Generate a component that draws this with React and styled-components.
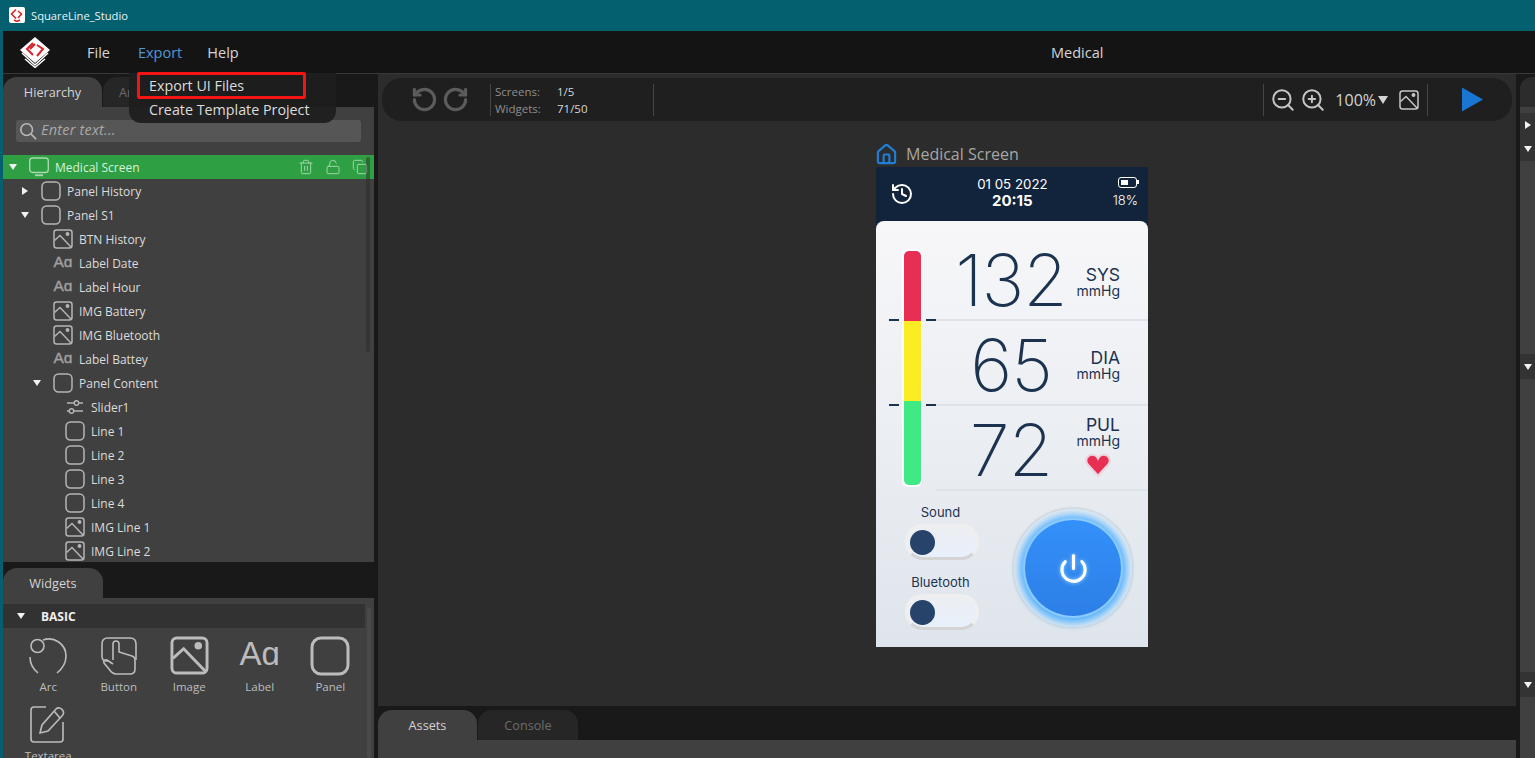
import styled, { createGlobalStyle } from 'styled-components';
import {
  Copy,
  History,
  House,
  LockOpen,
  Power,
  RotateCcw,
  RotateCw,
  Trash2,
  ZoomIn,
  ZoomOut,
} from 'lucide-react';

const GlobalStyle = createGlobalStyle`
  html, body {
    margin: 0;
    height: 100%;
    overflow: hidden;
    background: #04606f;
  }
  * { box-sizing: border-box; }
`;

const TREE = [
  { name: 'Medical Screen', level: 0, icon: 'screen', arrow: 'down', selected: true },
  { name: 'Panel History', level: 1, icon: 'panel', arrow: 'right' },
  { name: 'Panel S1', level: 1, icon: 'panel', arrow: 'down' },
  { name: 'BTN History', level: 2, icon: 'image' },
  { name: 'Label Date', level: 2, icon: 'label' },
  { name: 'Label Hour', level: 2, icon: 'label' },
  { name: 'IMG Battery', level: 2, icon: 'image' },
  { name: 'IMG Bluetooth', level: 2, icon: 'image' },
  { name: 'Label Battey', level: 2, icon: 'label' },
  { name: 'Panel Content', level: 2, icon: 'panel', arrow: 'down' },
  { name: 'Slider1', level: 3, icon: 'slider' },
  { name: 'Line 1', level: 3, icon: 'panel' },
  { name: 'Line 2', level: 3, icon: 'panel' },
  { name: 'Line 3', level: 3, icon: 'panel' },
  { name: 'Line 4', level: 3, icon: 'panel' },
  { name: 'IMG Line 1', level: 3, icon: 'image' },
  { name: 'IMG Line 2', level: 3, icon: 'image' },
];

const READINGS = [
  { value: '132', unit: 'SYS', height: 100, top: 20, shift: 2 },
  { value: '65', unit: 'DIA', height: 85, top: 4, shift: -1 },
  { value: '72', unit: 'PUL', height: 85, top: 4, shift: -7, heart: true },
];

function PanelIcon({ size = 20 }) {
  return (
    <svg width={size} height={size} viewBox="0 0 20 20" fill="none" stroke="currentColor" strokeWidth="1.5">
      <rect x="1" y="1" width="18" height="18" rx="4.5" />
    </svg>
  );
}

function ImageIcon({ size = 20 }) {
  return (
    <svg width={size} height={size} viewBox="0 0 20 20" fill="none" stroke="currentColor" strokeWidth="1.5">
      <rect x="1" y="1" width="18" height="18" rx="2.5" />
      <path d="M1.5 11.5 L7 6.5 L18 18" />
      <circle cx="14.5" cy="5" r="1.2" fill="currentColor" />
    </svg>
  );
}

function SliderIcon() {
  return (
    <svg width="18" height="18" viewBox="0 0 18 18" fill="none" stroke="currentColor" strokeWidth="1.4">
      <path d="M1 5 H8 M13 5 H17 M1 13 H3 M8 13 H17" />
      <circle cx="10.5" cy="5" r="2.2" />
      <circle cx="5.5" cy="13" r="2.2" />
    </svg>
  );
}

function ScreenIcon() {
  return (
    <svg width="20" height="20" viewBox="0 0 20 20" fill="none" stroke="#a9d8b0" strokeWidth="1.4">
      <rect x="0.7" y="1" width="18.6" height="14.5" rx="3" />
      <path d="M6 18.3 H14" strokeWidth="1.8" />
    </svg>
  );
}

function ArcIcon() {
  return (
    <svg width="40" height="40" viewBox="0 0 40 40" fill="none" stroke="currentColor" strokeWidth="1.6">
      <path d="M15 4 C26 0 38 8 38 20 C38 28 34 33 29 37 M10 37 C5 33 2 27 2 21" />
      <circle cx="9.5" cy="10" r="6.5" />
    </svg>
  );
}

function ButtonIcon() {
  return (
    <svg width="40" height="40" viewBox="0 0 40 40" fill="none" stroke="currentColor" strokeWidth="1.6">
      <path d="M10 25 H7 C4 25 3 23 3 20 V8 C3 4 5 2 9 2 H31 C35 2 37 4 37 8 V24" />
      <path d="M14 24 V8 C14 4 20 4 20 8 V16 L33 20 C36 21 36 23 36 26 V33 C36 37 34 38 31 38 H17 C14 38 12 36 10 33 L5 27 C4 25 6 23 8 24 L14 28" />
    </svg>
  );
}

function TextareaIcon() {
  return (
    <svg width="36" height="38" viewBox="0 0 36 38" fill="none" stroke="currentColor" strokeWidth="1.6">
      <path d="M16 2 H4 C2 2 1 3 1 5 V34 C1 36 2 37 4 37 H30 C32 37 33 36 33 34 V17" />
      <path d="M10 28 L12 20 L26 4 C28 2 31 3 32.500 5 C34 7 34 9 32 11 L18 26 Z" />
      <path d="M24 6 L30 13" />
    </svg>
  );
}

function Logo() {
  return (
    <svg width="32" height="32" viewBox="0 0 32 32">
      <path d="M16 1 L31 14 L16 27 L1 14 Z" fill="#fff" />
      <path d="M14 7 L8 13 L14 19 M18 9 L24 13 L18 20 M11 13 L16 8" fill="none" stroke="#d8242a" strokeWidth="2" />
      <path d="M3 17 L16 29 L29 17" fill="none" stroke="#fff" strokeWidth="1.6" />
      <path d="M6 23 L16 31.500 L26 23" fill="none" stroke="#fff" strokeWidth="1.4" />
    </svg>
  );
}

function WindowLogo() {
  return (
    <AppBadge>
      <svg width="14" height="14" viewBox="0 0 14 14" fill="none" stroke="#d8242a" strokeWidth="1.6">
        <path d="M6 1.500 L1.500 6 L6 10.500 M8 3 L11.500 6 L8 10 M4 12 L7 13.500 L10 12" />
      </svg>
    </AppBadge>
  );
}

function TreeIcon({ type }) {
  if (type === 'screen') return <ScreenIcon />;
  if (type === 'image') return <ImageIcon />;
  if (type === 'slider') return <SliderIcon />;
  if (type === 'label') return <AaMark>Aɑ</AaMark>;
  return <PanelIcon />;
}

function ReadingRow({ reading }) {
  return (
    <Reading $height={reading.height} $top={reading.top}>
      <BigValue>{reading.value}</BigValue>
      <UnitColumn $shift={reading.shift}>
        <UnitName>{reading.unit}</UnitName>
        <UnitSmall>mmHg</UnitSmall>
        {reading.heart && (
          <HeartIcon viewBox="0 0 24 24">
            <path
              d="M12 22 L2.500 11.500 C-0.500 7.500 2 2.500 6.500 2.500 C9 2.500 11 4 12 6 C13 4 15 2.500 17.500 2.500 C22 2.500 24.500 7.500 21.500 11.500 Z"
              fill="#e62f53"
              stroke="#ecd3dc"
              strokeWidth="2"
            />
          </HeartIcon>
        )}
      </UnitColumn>
    </Reading>
  );
}

export default function App() {
  return (
    <>
      <GlobalStyle />
      <Window>
        <TitleBar>
          <WindowLogo />
          <span>SquareLine_Studio</span>
        </TitleBar>

        <MenuBar>
          <LogoSlot>
            <Logo />
          </LogoSlot>
          <MenuItem $gap={28}>File</MenuItem>
          <MenuItem $gap={25} $active>Export</MenuItem>
          <MenuItem>Help</MenuItem>
          <ProjectName>Medical</ProjectName>
          <Dropdown>
            <DropdownItem>Export UI Files</DropdownItem>
            <DropdownItem>Create Template Project</DropdownItem>
            <RedMark />
          </Dropdown>
        </MenuBar>

        <Workspace>
          <LeftColumn>
            <Tabs>
              <Tab $active $width={99}>Hierarchy</Tab>
              <Tab $width={99}>Animations</Tab>
            </Tabs>
            <HierarchyPanel>
              <SearchBox>
                <SearchGlass viewBox="0 0 20 20">
                  <circle cx="8.500" cy="8.500" r="6.500" />
                  <path d="M13.500 13.500 L19 19" />
                </SearchGlass>
                <SearchHint>Enter text...</SearchHint>
              </SearchBox>
              <TreeList>
                {TREE.map((item) => (
                  <TreeRow key={item.name} $level={item.level} $selected={item.selected}>
                    <ArrowSlot>
                      {item.arrow === 'down' && <ArrowDown />}
                      {item.arrow === 'right' && <ArrowRight />}
                    </ArrowSlot>
                    <TreeIconSlot>
                      <TreeIcon type={item.icon} />
                    </TreeIconSlot>
                    <TreeName $selected={item.selected}>{item.name}</TreeName>
                    {item.selected && (
                      <RowActions>
                        <Trash2 size={16} strokeWidth={1.4} />
                        <LockOpen size={16} strokeWidth={1.4} />
                        <Copy size={16} strokeWidth={1.4} />
                      </RowActions>
                    )}
                  </TreeRow>
                ))}
                <TreeScroll />
              </TreeList>
            </HierarchyPanel>

            <WidgetTabs>
              <Tab $active $width={100}>Widgets</Tab>
            </WidgetTabs>
            <WidgetPanel>
              <WidgetHeader>
                <ArrowSlot>
                  <ArrowDown />
                </ArrowSlot>
                BASIC
              </WidgetHeader>
              <WidgetGrid>
                <WidgetCell>
                  <WidgetIcon><ArcIcon /></WidgetIcon>
                  Arc
                </WidgetCell>
                <WidgetCell>
                  <WidgetIcon><ButtonIcon /></WidgetIcon>
                  Button
                </WidgetCell>
                <WidgetCell>
                  <WidgetIcon><ImageIcon size={39} /></WidgetIcon>
                  Image
                </WidgetCell>
                <WidgetCell>
                  <WidgetIcon><BigAa>Aɑ</BigAa></WidgetIcon>
                  Label
                </WidgetCell>
                <WidgetCell>
                  <WidgetIcon><PanelIcon size={40} /></WidgetIcon>
                  Panel
                </WidgetCell>
                <WidgetCell>
                  <WidgetIcon><TextareaIcon /></WidgetIcon>
                  Textarea
                </WidgetCell>
              </WidgetGrid>
              <WidgetScroll />
            </WidgetPanel>
          </LeftColumn>

          <CenterColumn>
            <Canvas>
              <Toolbar>
                <UndoGroup>
                  <RotateCcw size={27} strokeWidth={2.8} />
                  <RotateCw size={27} strokeWidth={2.8} />
                </UndoGroup>
                <Separator />
                <Stats>
                  <StatName>Screens:</StatName>
                  <StatValue>1/5</StatValue>
                  <StatName>Widgets:</StatName>
                  <StatValue>71/50</StatValue>
                </Stats>
                <Separator />
                <ToolbarSpring />
                <Separator />
                <ZoomGroup>
                  <ZoomOut size={26} strokeWidth={1.8} />
                  <ZoomIn size={26} strokeWidth={1.8} />
                </ZoomGroup>
                <ZoomValue>100%</ZoomValue>
                <ZoomCaret />
                <ToolbarImage>
                  <ImageIcon size={20} />
                </ToolbarImage>
                <Separator />
                <PlayButton />
              </Toolbar>

              <PhoneBlock>
                <ScreenCaption>
                  <House size={23} color="#1f7fd6" strokeWidth={2.2} />
                  <span>Medical Screen</span>
                </ScreenCaption>
                <Phone>
                  <PhoneHeader>
                    <History size={24} color="#fff" strokeWidth={2} />
                    <DateBlock>
                      <DateText>01 05 2022</DateText>
                      <TimeText>20:15</TimeText>
                    </DateBlock>
                    <BatteryBlock>
                      <BatteryShell>
                        <BatteryLevel />
                      </BatteryShell>
                      <BatteryText>18%</BatteryText>
                    </BatteryBlock>
                  </PhoneHeader>
                  <PhoneBody>
                    <Measures>
                      <GaugeColumn>
                        <Gauge>
                          <GaugePart $color="#e62f53" $height={70} />
                          <GaugePart $color="#fbec23" $height={80} />
                          <GaugePart $color="#3fea85" $height={84} $last />
                          <Tick $top={70} $left={-13} />
                          <Tick $top={70} $left={24} />
                          <Tick $top={155} $left={-13} />
                          <Tick $top={155} $left={24} />
                        </Gauge>
                      </GaugeColumn>
                      <Readings>
                        {READINGS.map((r) => (
                          <ReadingRow key={r.unit} reading={r} />
                        ))}
                      </Readings>
                    </Measures>
                    <Controls>
                      <Toggles>
                        <ToggleLabel>Sound</ToggleLabel>
                        <Toggle>
                          <Knob />
                        </Toggle>
                        <ToggleLabel $second>Bluetooth</ToggleLabel>
                        <Toggle>
                          <Knob />
                        </Toggle>
                      </Toggles>
                      <PowerRing>
                        <PowerDisc>
                          <PowerGlyph size={31} color="#fff" strokeWidth={2.4} />
                        </PowerDisc>
                      </PowerRing>
                    </Controls>
                  </PhoneBody>
                </Phone>
              </PhoneBlock>
            </Canvas>

            <BottomTabs>
              <Tab $active $width={99}>Assets</Tab>
              <Tab $width={100}>Console</Tab>
            </BottomTabs>
            <AssetsPanel />
          </CenterColumn>

          <RightColumn>
            <RightTab />
            <RightPanel>
              <RightRow $top={6} $height={24}>
                <ArrowRight />
              </RightRow>
              <RightRow $top={0} $height={24}>
                <ArrowDown />
              </RightRow>
              <RightRow $top={193} $height={25}>
                <ArrowDown />
              </RightRow>
              <RightRow $top={293} $height={25}>
                <ArrowDown />
              </RightRow>
            </RightPanel>
          </RightColumn>
        </Workspace>
      </Window>
    </>
  );
}

const Window = styled.div`
  width: 1535px;
  height: 758px;
  display: flex;
  flex-direction: column;
  padding-left: 3px;
  background: #04606f;
  font-family: 'Open Sans', 'Noto Sans', sans-serif;
  overflow: hidden;
`;

const TitleBar = styled.div`
  height: 31px;
  margin-left: -3px;
  display: flex;
  align-items: center;
  gap: 6px;
  padding-left: 9px;
  padding-bottom: 1px;
  color: #e8f2f4;
  font-size: 11.2px;
  flex-shrink: 0;
`;

const AppBadge = styled.div`
  width: 16px;
  height: 16px;
  border-radius: 2px;
  background: #fff;
  display: flex;
  align-items: center;
  justify-content: center;
`;

const MenuBar = styled.div`
  position: relative;
  height: 43px;
  flex-shrink: 0;
  display: flex;
  align-items: center;
  background: #141414;
  border-bottom: 1px solid #383838;
  font-size: 14.5px;
  z-index: 5;
`;

const LogoSlot = styled.div`
  width: 84px;
  padding-left: 16px;
  display: flex;
`;

const MenuItem = styled.div`
  color: ${(p) => (p.$active ? '#4f98d6' : '#d6d6d6')};
  margin-right: ${(p) => p.$gap || 0}px;
`;

const ProjectName = styled.div`
  position: absolute;
  left: 1048px;
  top: 12px;
  color: #d6d6d6;
  font-size: 14.5px;
`;

const Dropdown = styled.div`
  position: absolute;
  left: 126px;
  top: 42px;
  width: 207px;
  height: 50px;
  padding: 1px 0 0 20px;
  background: rgba(30, 30, 30, 0.94);
  border-radius: 0 0 12px 12px;
`;

const DropdownItem = styled.div`
  height: 24px;
  line-height: 24px;
  color: #dcdcdc;
  font-size: 14.3px;
  white-space: nowrap;
`;

const RedMark = styled.div`
  position: absolute;
  left: 8px;
  top: -1px;
  width: 169px;
  height: 27px;
  border: 3px solid #f51414;
  border-radius: 2px;
`;

const Workspace = styled.div`
  flex: 1;
  min-height: 0;
  display: flex;
  background: #191919;
`;

const LeftColumn = styled.div`
  width: 371px;
  display: flex;
  flex-direction: column;
  flex-shrink: 0;
`;

const Tabs = styled.div`
  display: flex;
  gap: 1px;
  padding-top: 3px;
  height: 33px;
  flex-shrink: 0;
`;

const Tab = styled.div`
  width: ${(p) => p.$width}px;
  height: 30px;
  border-radius: 14px 14px 0 0;
  background: ${(p) => (p.$active ? '#404040' : '#262626')};
  color: ${(p) => (p.$active ? '#d4d4d4' : '#6c6c6c')};
  font-size: 12.7px;
  line-height: 30px;
  text-align: center;
`;

const HierarchyPanel = styled.div`
  height: 455px;
  background: #404040;
  display: flex;
  flex-direction: column;
  flex-shrink: 0;
  overflow: hidden;
`;

const SearchBox = styled.div`
  height: 22px;
  margin: 13px 13px 13px 13px;
  display: flex;
  align-items: center;
  gap: 4px;
  padding-left: 3px;
  border-radius: 3px;
  background: #565656;
  color: #a8a8a8;
  font-size: 14.5px;
  font-style: italic;
  letter-spacing: 0.2px;
  flex-shrink: 0;
`;

const SearchHint = styled.span`
  line-height: 20px;
  margin-bottom: 2px;
`;

const SearchGlass = styled.svg`
  width: 18px;
  height: 18px;
  fill: none;
  stroke: #b8b8b8;
  stroke-width: 1.8;
`;

const TreeList = styled.div`
  position: relative;
  flex: 1;
  overflow: hidden;
`;

const TreeRow = styled.div`
  height: 24px;
  display: flex;
  align-items: center;
  padding-left: ${(p) => p.$level * 12 + 2}px;
  background: ${(p) => (p.$selected ? '#2ea043' : 'transparent')};
`;

const ArrowSlot = styled.div`
  width: 16px;
  display: flex;
  justify-content: center;
  flex-shrink: 0;
`;

const ArrowDown = styled.div`
  width: 0;
  height: 0;
  border-left: 4px solid transparent;
  border-right: 4px solid transparent;
  border-top: 6px solid #f2f2f2;
`;

const ArrowRight = styled.div`
  width: 0;
  height: 0;
  border-top: 4px solid transparent;
  border-bottom: 4px solid transparent;
  border-left: 6px solid #f2f2f2;
`;

const TreeIconSlot = styled.div`
  width: 20px;
  height: 20px;
  margin-left: 8px;
  margin-right: 6px;
  color: #b4b4b4;
  display: flex;
  align-items: center;
  justify-content: center;
  flex-shrink: 0;
`;

const AaMark = styled.span`
  font-family: 'Liberation Sans', sans-serif;
  font-size: 15.5px;
  -webkit-text-stroke: 0.4px #a0a0a0;
  color: #a0a0a0;
  line-height: 20px;
  margin-top: -3px;
`;

const TreeName = styled.div`
  color: ${(p) => (p.$selected ? '#d8f0dc' : '#dcdcdc')};
  font-size: 12px;
  white-space: nowrap;
`;

const RowActions = styled.div`
  margin-left: auto;
  margin-right: 6px;
  display: flex;
  gap: 11px;
  color: #a9d8b0;
`;

const TreeScroll = styled.div`
  position: absolute;
  right: 4px;
  top: 2px;
  bottom: 210px;
  width: 4px;
  border-radius: 2px;
  background: rgba(40, 40, 40, 0.45);
`;

const WidgetTabs = styled.div`
  display: flex;
  padding-top: 6px;
  height: 36px;
  flex-shrink: 0;
`;

const WidgetPanel = styled.div`
  position: relative;
  flex: 1;
  min-height: 0;
  padding-top: 6px;
  background: #404040;
  overflow: hidden;
`;

const WidgetHeader = styled.div`
  height: 24px;
  width: 362px;
  display: flex;
  align-items: center;
  background: #323232;
  color: #f0f0f0;
  font-size: 12px;
  font-weight: 700;
  padding-left: 10px;
  gap: 12px;
`;

const WidgetGrid = styled.div`
  display: grid;
  grid-template-columns: repeat(5, 70.5px);
  padding: 8px 0 0 10px;
  row-gap: 10px;
`;

const WidgetCell = styled.div`
  display: flex;
  flex-direction: column;
  align-items: center;
  color: #bdbdbd;
  font-size: 11.5px;
  line-height: 16px;
`;

const WidgetIcon = styled.div`
  height: 43px;
  display: flex;
  align-items: flex-start;
  justify-content: center;
  color: #bcbcbc;
`;

const BigAa = styled.span`
  font-family: 'Liberation Sans', sans-serif;
  font-size: 33px;
  line-height: 40px;
  color: #bcbcbc;
  margin-top: -2px;
`;

const WidgetScroll = styled.div`
  position: absolute;
  right: 3px;
  top: 10px;
  bottom: 0;
  width: 4px;
  background: #4a4a4d;
  border-radius: 2px;
`;

const CenterColumn = styled.div`
  width: 1138px;
  margin-left: 4px;
  display: flex;
  flex-direction: column;
  flex-shrink: 0;
`;

const Canvas = styled.div`
  height: 632px;
  flex-shrink: 0;
  padding: 4px 4px 0 4px;
  background: #2c2c2c;
`;

const Toolbar = styled.div`
  height: 43px;
  display: flex;
  align-items: center;
  padding-left: 29px;
  border-radius: 20px;
  background: #1f1f1f;
`;

const UndoGroup = styled.div`
  display: flex;
  gap: 4px;
  width: 79px;
  color: #5c5c5c;
`;

const Separator = styled.div`
  width: 1px;
  height: 32px;
  background: #464646;
  flex-shrink: 0;
`;

const Stats = styled.div`
  width: 162px;
  display: grid;
  grid-template-columns: 62px 1fr;
  padding-left: 4px;
  font-size: 11.5px;
  line-height: 17px;
`;

const StatName = styled.span`
  color: #8e8e8e;
`;

const StatValue = styled.span`
  color: #d6d6d6;
`;

const ToolbarSpring = styled.div`
  flex: 1;
`;

const ZoomGroup = styled.div`
  display: flex;
  gap: 4px;
  padding-left: 6px;
  color: #c6c6c6;
`;

const ZoomValue = styled.div`
  margin-left: 9px;
  color: #d4d4d4;
  font-size: 16px;
`;

const ZoomCaret = styled.div`
  margin-left: 2px;
  border-left: 5px solid transparent;
  border-right: 5px solid transparent;
  border-top: 8px solid #d4d4d4;
`;

const ToolbarImage = styled.div`
  margin: 0 8px 0 11px;
  height: 20px;
  color: #c6c6c6;
`;

const PlayButton = styled.div`
  margin-left: 34px;
  margin-right: 29px;
  width: 21px;
  height: 24px;
  background: #1976d2;
  clip-path: polygon(0 0, 100% 50%, 0 100%);
`;

const PhoneBlock = styled.div`
  width: 272px;
  margin: 20px 0 0 494px;
`;

const ScreenCaption = styled.div`
  height: 26px;
  display: flex;
  align-items: center;
  gap: 8px;
  margin-left: -1px;
  color: #a6a6a6;
  font-size: 16px;
`;

const Phone = styled.div`
  width: 272px;
  height: 480px;
  display: flex;
  flex-direction: column;
  background: #12243b;
  font-family: Inter, 'Noto Sans', sans-serif;
`;

const PhoneHeader = styled.div`
  height: 54px;
  display: flex;
  align-items: center;
  justify-content: space-between;
  padding: 0 10px 0 14px;
  color: #fff;
  flex-shrink: 0;
`;

const DateBlock = styled.div`
  display: flex;
  flex-direction: column;
  align-items: center;
  margin: 0 0 4px -2px;
`;

const DateText = styled.div`
  font-size: 13.3px;
  line-height: 16px;
`;

const TimeText = styled.div`
  font-size: 15px;
  line-height: 17px;
  font-weight: 700;
`;

const BatteryBlock = styled.div`
  display: flex;
  flex-direction: column;
  align-items: flex-end;
  gap: 4px;
  margin-bottom: 4px;
`;

const BatteryShell = styled.div`
  position: relative;
  width: 19px;
  height: 11px;
  margin-right: 1px;
  padding: 2px;
  border: 1.5px solid #fff;
  border-radius: 3px;

  &::after {
    content: '';
    position: absolute;
    right: -3px;
    top: 2px;
    width: 2px;
    height: 4px;
    background: #fff;
  }
`;

const BatteryLevel = styled.div`
  width: 7px;
  height: 100%;
  background: #fff;
`;

const BatteryText = styled.div`
  font-size: 13px;
  line-height: 16px;
  font-weight: 300;
`;

const PhoneBody = styled.div`
  flex: 1;
  border-radius: 8px 8px 0 0;
  background: linear-gradient(180deg, #f7f7f9 0%, #dfe5ec 100%);
  color: #1c3350;
`;

const Measures = styled.div`
  display: flex;
`;

const GaugeColumn = styled.div`
  width: 60px;
  padding: 28px 0 0 27px;
  flex-shrink: 0;
`;

const Gauge = styled.div`
  position: relative;
  width: 20px;
  height: 238px;
  margin-left: -1px;
  padding: 2px 1.5px;
  background: #fff;
  border-radius: 6px;
  display: flex;
  flex-direction: column;
`;

const GaugePart = styled.div`
  height: ${(p) => p.$height}px;
  background: ${(p) => p.$color};
  border-radius: ${(p) => (p.$last ? '0 0 5px 5px' : p.$height === 70 ? '5px 5px 0 0' : '0')};
`;

const Tick = styled.div`
  position: absolute;
  top: ${(p) => p.$top}px;
  left: ${(p) => p.$left}px;
  width: 10px;
  height: 2px;
  background: #1c3350;
`;

const Readings = styled.div`
  flex: 1;
`;

const Reading = styled.div`
  height: ${(p) => p.$height}px;
  padding: ${(p) => p.$top}px 28px 0 14px;
  display: flex;
  align-items: center;
  border-bottom: 2px solid #dee2e9;
`;

const BigValue = styled.div`
  width: 122px;
  text-align: center;
  font-size: 72px;
  line-height: 72px;
  font-weight: 200;
  letter-spacing: -1px;
`;

const UnitColumn = styled.div`
  margin-left: auto;
  margin-top: ${(p) => p.$shift}px;
  display: flex;
  flex-direction: column;
  align-items: flex-end;
`;

const UnitName = styled.div`
  font-size: 17.5px;
  line-height: 19px;
`;

const UnitSmall = styled.div`
  font-size: 14px;
  line-height: 13px;
`;

const HeartIcon = styled.svg`
  width: 26px;
  height: 26px;
  margin: 5px 9px 0 0;
`;

const Controls = styled.div`
  display: flex;
  padding: 16px 0 0 29px;
`;

const Toggles = styled.div`
  width: 74px;
  margin-top: -3px;
  display: flex;
  flex-direction: column;
  align-items: center;
`;

const ToggleLabel = styled.div`
  font-size: 13px;
  line-height: 16px;
  padding-right: 3px;
  margin-top: ${(p) => (p.$second ? '14px' : '0')};
  margin-bottom: ${(p) => (p.$second ? '4px' : '4px')};
`;

const Toggle = styled.div`
  width: 74px;
  height: 36px;
  display: flex;
  align-items: center;
  padding-left: 5px;
  border-radius: 18px;
  border: 3px solid #efefef;
  border-bottom-color: #d4d4d4;
  background: linear-gradient(180deg, #eceef1 0%, #e8f0fb 100%);
`;

const Knob = styled.div`
  width: 25px;
  height: 25px;
  margin-left: -3px;
  border-radius: 50%;
  background: #27436a;
`;

const PowerRing = styled.div`
  width: 122px;
  height: 122px;
  margin: 0 0 0 33px;
  display: flex;
  align-items: center;
  justify-content: center;
  border-radius: 50%;
  background: #e7ecf1;
  border: 2px solid #dadde1;
`;

const PowerDisc = styled.div`
  width: 96px;
  height: 96px;
  display: flex;
  align-items: center;
  justify-content: center;
  border-radius: 50%;
  background: linear-gradient(180deg, #3490fa 0%, #2d7fe6 100%);
  box-shadow: 0 0 0 2px #8ccbff, 0 1px 8px 6px #4fb0ff;
`;

const PowerGlyph = styled(Power)`
  filter: drop-shadow(0 0 2px #8fd4ff);
`;

const BottomTabs = styled.div`
  height: 34px;
  padding-top: 4px;
  display: flex;
  gap: 1px;
  flex-shrink: 0;
`;

const AssetsPanel = styled.div`
  flex: 1;
  background: #404040;
`;

const RightColumn = styled.div`
  flex: 1;
  margin-left: 4px;
  display: flex;
  flex-direction: column;
`;

const RightTab = styled.div`
  height: 30px;
  margin-top: 3px;
  border-radius: 12px 0 0 0;
  background: #2c2c2c;
  flex-shrink: 0;
`;

const RightPanel = styled.div`
  flex: 1;
  background: #404040;
`;

const RightRow = styled.div`
  height: ${(p) => p.$height}px;
  margin-top: ${(p) => p.$top}px;
  display: flex;
  align-items: center;
  justify-content: center;
  background: #333;
`;
